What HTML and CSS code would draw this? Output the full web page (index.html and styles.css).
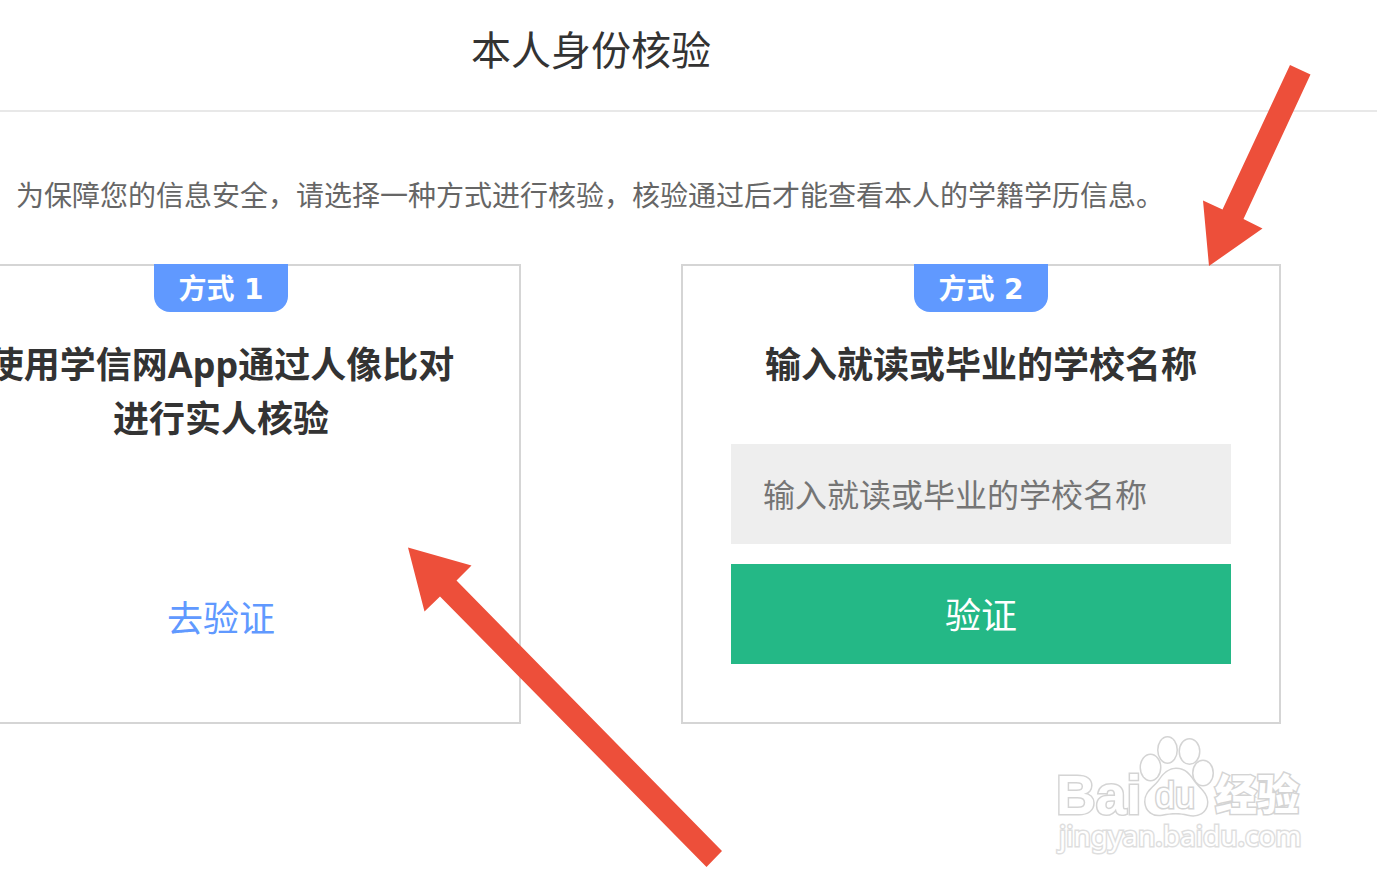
FILE: index.html
```html
<!DOCTYPE html>
<html lang="zh-CN">
<head>
<meta charset="utf-8">
<title>本人身份核验</title>
<link rel="stylesheet" href="styles.css">
</head>
<body>
<header class="header"><h1 class="title">本人身份核验</h1></header>
<main class="main">
  <p class="intro">为保障您的信息安全，请选择一种方式进行核验，核验通过后才能查看本人的学籍学历信息。</p>
  <div class="cards">
    <section class="card">
      <span class="tag">方式 1</span>
      <h2 class="card-title">使用学信网App通过人像比对<br>进行实人核验</h2>
      <a class="go" href="#">去验证</a>
    </section>
    <section class="card">
      <span class="tag">方式 2</span>
      <h2 class="card-title">输入就读或毕业的学校名称</h2>
      <form class="form">
        <input class="field" type="text" aria-label="学校名称" placeholder="输入就读或毕业的学校名称">
        <button class="submit" type="button">验证</button>
      </form>
    </section>
  </div>
</main>
<svg class="overlay" width="1377" height="884" viewBox="0 0 1377 884" aria-hidden="true">
  <g class="arrow">
    <path d="M1290 65L1310.500 74.500L1243.500 219L1262.500 228.500L1209 266L1203 200.500L1222.500 209.500Z"/>
    <path d="M408 547.500L471.500 565.500L456.500 580.500L722 851L706.500 867L440 596.500L424.500 611.500Z"/>
  </g>
  <g class="mark">
    <text class="mark-latin" x="1056" y="814">Bai</text>
    <ellipse cx="1150.500" cy="767.500" rx="9.500" ry="12.500"/>
    <ellipse cx="1167.500" cy="750" rx="9" ry="12.500"/>
    <ellipse cx="1189.500" cy="751.500" rx="9.500" ry="12"/>
    <ellipse cx="1203" cy="773" rx="9.500" ry="12"/>
    <path d="M1176 769C1168 769 1163 775 1159 781C1154 788 1145 792 1145.500 802C1146 811 1153 816 1162 814.500C1172 812.500 1180 812.500 1188 814.500C1198 817 1207 812 1207 802C1207 794 1200 789 1195 783C1190 776 1186 769 1176 769Z"/>
    <text class="mark-du" x="1155" y="808">du</text>
    <text class="mark-cjk" x="1215" y="810">经验</text>
    <text class="mark-url" x="1059" y="846">jingyan.baidu.com</text>
  </g>
</svg>
</body>
</html>
```
FILE: styles.css
```css
* { box-sizing: border-box; }
body {
  margin: 0;
  overflow: hidden;
  background: #fff;
  color: #333;
  font-family: "Noto Sans", "Noto Sans CJK SC", sans-serif;
}
.header {
  padding: 18px 195px 32px 0;
  border-bottom: 2px solid #e8e8e8;
  text-align: center;
}
.title { margin: 0; font-size: 40px; line-height: 60px; font-weight: 400; font-family: "Noto Sans CJK SC", sans-serif; }
.main { margin-left: -79px; padding-right: 96px; }
.intro {
  margin: 0;
  padding: 62px 0 50px 95px;
  font: 28px/40px "Noto Sans CJK SC", sans-serif;
  color: #666;
  white-space: nowrap;
}
.cards { display: grid; grid-template-columns: 1fr 1fr; gap: 160px; }
.card {
  display: flex;
  flex-direction: column;
  align-items: center;
  min-height: 460px;
  padding: 0 48px 58px;
  border: 2px solid #d5d5d5;
}
.tag {
  margin-top: -2px;
  padding: 4px 24px 0;
  border-radius: 0 0 16px 16px;
  background: #6099ff;
  color: #fff;
  font: bold 28px/44px "Noto Sans CJK SC", sans-serif;
  font-family: "DejaVu Sans", "Noto Sans CJK SC", sans-serif;
}
.card-title {
  margin: 26px 0 0;
  font-size: 36px;
  line-height: 54px;
  text-align: center;
  white-space: nowrap;
}
.go { margin-top: auto; padding-bottom: 18px; color: #6099ff; font-size: 36px; line-height: 54px; text-decoration: none; }
.form { display: grid; gap: 20px; width: 100%; margin-top: auto; }
.field, .submit {
  width: 100%;
  height: 100px;
  border: 0;
  border-radius: 0;
  font-family: "Noto Sans CJK SC", sans-serif;
}
.field { padding: 0 32px 2px; background: #eee; font-size: 32px; }
.field::placeholder { color: #757575; }
.submit { padding: 0 0 2px; background: #24b886; color: #fff; font-size: 36px; }
.overlay { position: absolute; top: 0; left: 0; pointer-events: none; }
.arrow { fill: #ed4f3a; }
.mark { fill: #fff; stroke: #d4d4d4; stroke-width: 3px; paint-order: stroke; }
.mark-latin { font: bold 55px "Liberation Sans", sans-serif; }
.mark-du { font: 36px "Liberation Sans", sans-serif; }
.mark-cjk { font: 900 42px "Noto Sans CJK SC", sans-serif; }
.mark-url { font: 28px "Noto Sans", sans-serif; stroke: #dedede; }
```
